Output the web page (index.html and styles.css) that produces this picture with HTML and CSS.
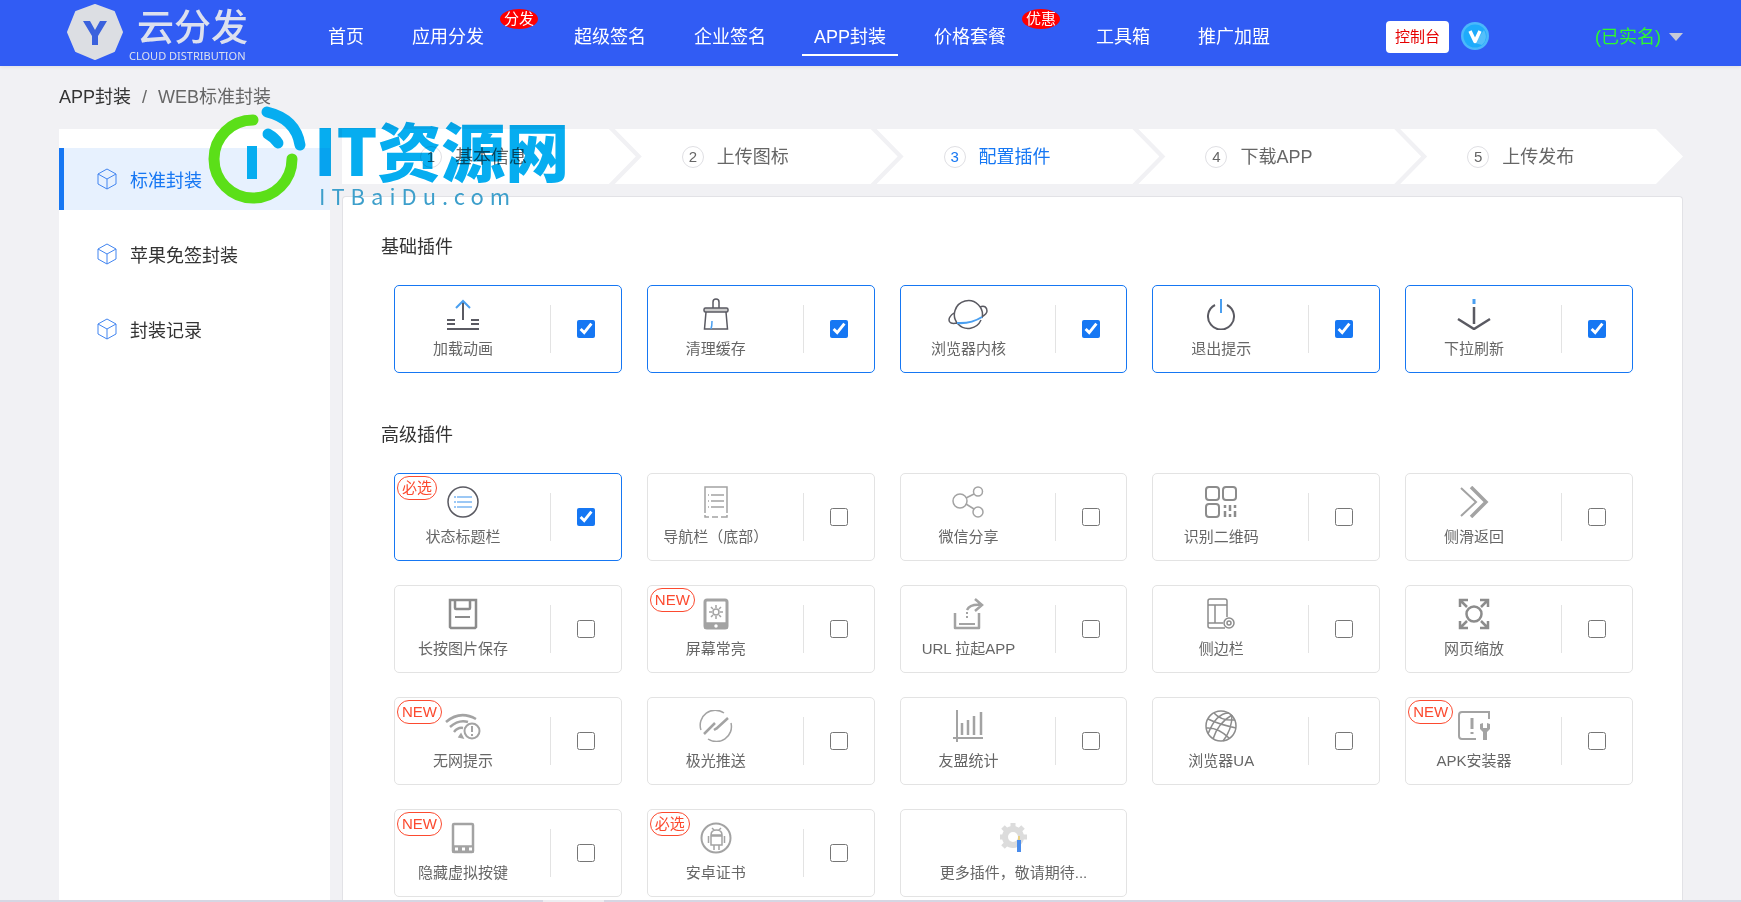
FILE: index.html
```html
<!DOCTYPE html>
<html lang="zh-CN">
<head>
<meta charset="utf-8">
<title>WEB标准封装</title>
<link rel="stylesheet" href="styles.css">
</head>
<body>
<header class="header">
  <a class="logo" href="#">
    <svg class="logo-mark" viewBox="0 0 56 56" width="56" height="56"><path d="M28 1 47 8 55 28 47 47 28 55 9 47 1 28 9 8Z" fill="#dcdee3" stroke="#dcdee3" stroke-width="2" stroke-linejoin="round"/><path d="M16 17h7l5 9 5-9h7l-9 15v9h-6v-9z" fill="#3a61dd"/></svg>
    <span class="logo-text"><span class="logo-name">云分发</span><span class="logo-sub">CLOUD DISTRIBUTION</span></span>
  </a>
  <nav class="nav">
    <a href="#">首页</a>
    <span class="nav-group"><a href="#">应用分发</a><span class="nav-badge">分发</span></span>
    <a href="#">超级签名</a>
    <a href="#">企业签名</a>
    <a class="current" href="#">APP封装</a>
    <span class="nav-group"><a href="#">价格套餐</a><span class="nav-badge">优惠</span></span>
    <a href="#">工具箱</a>
    <a href="#">推广加盟</a>
  </nav>
  <a class="console" href="#">控制台</a>
  <svg class="vip" viewBox="0 0 28 28" width="28" height="28"><circle cx="14" cy="14" r="14" fill="#4bb8fb"/><circle cx="14" cy="14" r="11.500" fill="#1eabfb"/><path d="M14 21 23 8a11.500 11.500 0 0 1-2 15z" fill="#55bffa"/><path d="M9 9 14 19.500 19 9" fill="none" stroke="#fff" stroke-width="3.500" stroke-linejoin="round"/></svg>
  <button class="user" type="button">(已实名)<span class="caret"></span></button>
</header>

<div class="page">
  <nav class="crumbs"><a href="#">APP封装</a><span class="slash">/</span><span>WEB标准封装</span></nav>
  <div class="layout">
    <aside class="side">
      <a class="side-item active" href="#"><svg class="cube" viewBox="0 0 20 22"><path d="M10 1 19 6V16L10 21 1 16V6ZM1 6 10 11 19 6M10 11V21"/></svg>标准封装</a>
      <a class="side-item" href="#"><svg class="cube" viewBox="0 0 20 22"><path d="M10 1 19 6V16L10 21 1 16V6ZM1 6 10 11 19 6M10 11V21"/></svg>苹果免签封装</a>
      <a class="side-item" href="#"><svg class="cube" viewBox="0 0 20 22"><path d="M10 1 19 6V16L10 21 1 16V6ZM1 6 10 11 19 6M10 11V21"/></svg>封装记录</a>
    </aside>
    <main class="main">
      <ol class="steps">
        <li class="step"><span class="num">1</span>基本信息</li>
        <li class="step"><span class="num">2</span>上传图标</li>
        <li class="step on"><span class="num">3</span>配置插件</li>
        <li class="step"><span class="num">4</span>下载APP</li>
        <li class="step"><span class="num">5</span>上传发布</li>
      </ol>
      <div class="panel">
        <section>
          <h2>基础插件</h2>
          <div class="cards">
            <label class="card picked"><span class="info"><svg class="icon dark" viewBox="0 0 40 32"><path d="M20 3V22" stroke-width="2"/><path class="blue" d="M13 10 20 3 27 10" stroke-width="2"/><path d="M4 22h8M4 26h8M28 22h8M28 26h8M4 31h32" stroke-width="2"/></svg>加载动画</span><span class="pick"><input type="checkbox" checked></span></label>
            <label class="card picked"><span class="info"><svg class="icon dark" viewBox="0 0 40 32"><path d="M17 10V4a3 3 0 0 1 6 0v6"/><rect x="8" y="10" width="24" height="4" rx="1.500" fill="#ccc"/><path d="M10 14 8.500 31h23L30 14"/><path class="blue" d="M15 31q1-3 1-8"/></svg>清理缓存</span><span class="pick"><input type="checkbox" checked></span></label>
            <label class="card picked"><span class="info"><svg class="icon dark" viewBox="0 0 40 32"><path d="M10 26A14 14 0 1 1 34 20M33 22A14 14 0 0 1 10 26M32 9c4-2 7 0 7 4 0 2-2 4-5 6M6 15c-3 2-5 4-5 7 0 3 3 4 8 3"/><path class="blue" d="M9 25q14 1 25-6" stroke-width="2"/></svg>浏览器内核</span><span class="pick"><input type="checkbox" checked></span></label>
            <label class="card picked"><span class="info"><svg class="icon dark" viewBox="0 0 40 32"><path d="M14 7A13 13 0 1 0 26 7" stroke-width="2"/><path class="blue" d="M20 1v14" stroke-width="2"/></svg>退出提示</span><span class="pick"><input type="checkbox" checked></span></label>
            <label class="card picked"><span class="info"><svg class="icon dark" viewBox="0 0 40 32"><path d="M20 9v17M4 21 20 31 36 21" stroke-width="2.500"/><path class="blue" d="M20 1v5" stroke-width="3"/></svg>下拉刷新</span><span class="pick"><input type="checkbox" checked></span></label>
          </div>
        </section>
        <section>
          <h2>高级插件</h2>
          <div class="cards">
            <label class="card picked"><span class="tag">必选</span><span class="info"><svg class="icon dark" viewBox="0 0 40 32"><circle cx="20" cy="16" r="15"/><path class="blue pale" d="M14 11h15M14 16h15M14 21h15M11 11h2M11 16h2M11 21h2" stroke-width="2"/></svg>状态标题栏</span><span class="pick"><input type="checkbox" checked></span></label>
            <label class="card"><span class="info"><svg class="icon" viewBox="0 0 40 32"><path d="M9 27V1h22v26M9 29v2h4M16 31h6M25 31h6v-2M15 9h13M15 15h13M15 21h13M12 9h1M12 15h1M12 21h1"/></svg>导航栏（底部）</span><span class="pick"><input type="checkbox"></span></label>
            <label class="card"><span class="info"><svg class="icon" viewBox="0 0 40 32"><circle cx="12" cy="15" r="7"/><circle cx="30" cy="5.500" r="4.500"/><circle cx="30" cy="26" r="5"/><path d="M18 12 26 8M18 18 26 23"/></svg>微信分享</span><span class="pick"><input type="checkbox"></span></label>
            <label class="card"><span class="info"><svg class="icon mid" viewBox="0 0 40 32"><g stroke-width="2"><rect x="5" y="1" width="13" height="13" rx="3"/><rect x="22" y="1" width="13" height="13" rx="3"/><rect x="5" y="18" width="13" height="13" rx="3"/></g><path d="M24 19v3M24 25v6M29 19v6M29 28v3M34 19v3M34 25v6" stroke-width="2.500"/></svg>识别二维码</span><span class="pick"><input type="checkbox"></span></label>
            <label class="card"><span class="info"><svg class="icon" viewBox="0 0 40 32"><path d="M7 2 22 16 7 30" stroke-width="2"/><path d="M17 1 32 16 17 31" stroke-width="3.500"/></svg>侧滑返回</span><span class="pick"><input type="checkbox"></span></label>

            <label class="card"><span class="info"><svg class="icon mid" viewBox="0 0 40 32"><path d="M7 2h26v27l-1 1H8l-1-1zM12 2v8q0 1 1 1h13q1 0 1-1V2" stroke-width="2.500"/><path d="M12 19h15" stroke-width="2"/></svg>长按图片保存</span><span class="pick"><input type="checkbox"></span></label>
            <label class="card"><span class="tag">NEW</span><span class="info"><svg class="icon" viewBox="0 0 40 32"><rect x="9" y="2" width="22" height="28" rx="2" stroke-width="3"/><path d="M9 25h22v5H9z" fill="#a3a3a3"/><circle cx="20" cy="28" r="1" fill="#fff" stroke="#fff"/><circle cx="20" cy="14" r="3"/><path d="M20 7v3M20 18v3M13 14h3M24 14h3M15 9l2 2M23 17l2 2M25 9l-2 2M17 17l-2 2"/></svg>屏幕常亮</span><span class="pick"><input type="checkbox"></span></label>
            <label class="card"><span class="info"><svg class="icon" viewBox="0 0 40 32"><path d="M7 15v15h24V15" stroke-width="2.500" stroke-linejoin="round"/><path d="M11 26h16" stroke-width="2"/><path d="M19 12q3-6 14-5M27 1l7 6-7 6" stroke-width="2.500"/><path d="M19 14v2M19 18v2" stroke-width="2"/></svg>URL 拉起APP</span><span class="pick"><input type="checkbox"></span></label>
            <label class="card"><span class="info"><svg class="icon mid" viewBox="0 0 40 32"><path d="M24 30H9q-2 0-2-2V3q0-2 2-2h15q2 0 2 2v16M7 7h19M7 25h15M14 7v18"/><circle cx="28" cy="25" r="5"/><circle cx="28" cy="25" r="2"/></svg>侧边栏</span><span class="pick"><input type="checkbox"></span></label>
            <label class="card"><span class="info"><svg class="icon mid" viewBox="0 0 40 32"><circle cx="20" cy="16" r="7.500" stroke-width="2.500"/><path d="M6 9V2h8M6 2l7 7M26 2h8v7M34 2l-7 7M6 23v7h8M6 30l7-7M34 23v7h-8M34 30l-7-7" stroke-width="2.500"/></svg>网页缩放</span><span class="pick"><input type="checkbox"></span></label>

            <label class="card"><span class="tag">NEW</span><span class="info"><svg class="icon" viewBox="0 0 40 32"><path d="M3 12Q17 0 33 9M7 17q9-8 18-5M11 22q4-5 9-4" stroke-width="2.500"/><path d="M16 27l2-3 2 4z" fill="#a3a3a3"/><circle cx="29" cy="21" r="7.500" stroke-width="2"/><path d="M29 16v6M29 24v2" stroke-width="2"/></svg>无网提示</span><span class="pick"><input type="checkbox"></span></label>
            <label class="card"><span class="info"><svg class="icon" viewBox="0 0 40 32"><path d="M5 20A15 15 0 0 1 28 3M35 13A15 15 0 0 1 12 29"/><path d="M8 24 19 13M18 20l3-2M20 19 32 8" stroke-width="2.500"/></svg>极光推送</span><span class="pick"><input type="checkbox"></span></label>
            <label class="card"><span class="info"><svg class="icon" viewBox="0 0 40 32"><path d="M9 0v32M5 28h30" stroke-width="2"/><path d="M14 13v12M20 10v15M26 6v19M33 2v23" stroke-width="2.500"/></svg>友盟统计</span><span class="pick"><input type="checkbox"></span></label>
            <label class="card"><span class="info"><svg class="icon mid" viewBox="0 0 40 32"><circle cx="20" cy="16" r="15"/><path d="M13 3q7 8 21 7M7 9q10 5 28 9M5 18q12-1 23 10M7 24Q15 3 28 3M12 29Q17 13 31 5M22 31Q31 20 31 5"/></svg>浏览器UA</span><span class="pick"><input type="checkbox"></span></label>
            <label class="card"><span class="tag">NEW</span><span class="info"><svg class="icon" viewBox="0 0 40 32"><path d="M22 29H8q-3 0-3-3V5q0-3 3-3h27v7" stroke-width="2"/><path d="M18 8v11M18 22v2" stroke-width="3"/><path d="M26 14v5l3 3v8h4v-8l3-3v-5l-3-1v5h-4v-5z" fill="#a3a3a3" stroke="none"/></svg>APK安装器</span><span class="pick"><input type="checkbox"></span></label>

            <label class="card"><span class="tag">NEW</span><span class="info"><svg class="icon" viewBox="0 0 40 32"><rect x="10" y="2" width="20" height="28" rx="1" stroke-width="2.500"/><path d="M10 24h20v6H10z" fill="#a3a3a3"/><path d="M12 27h3M19 27h3M26 27h3" stroke="#fff" stroke-width="3"/></svg>隐藏虚拟按键</span><span class="pick"><input type="checkbox"></span></label>
            <label class="card"><span class="tag">必选</span><span class="info"><svg class="icon" viewBox="0 0 40 32"><circle cx="20" cy="16" r="14.500" stroke-width="2"/><path d="M15 13q0-5 5.500-5t5.500 5zM15 14h11v9H15zM18 23v5M23 23v5M12.500 14v7M28.500 14v7M16 6l2 2M25 6l-2 2"/></svg>安卓证书</span><span class="pick"><input type="checkbox"></span></label>
            <div class="card more"><svg class="icon" viewBox="0 0 40 32"><g stroke="#dcdcdc"><circle cx="20" cy="15" r="8" stroke-width="6"/><path d="M20 1v4M7 15h3M30 15h4M10 5l4 4M30 5l-4 4M10 25l4-4" stroke-width="5"/></g><path d="M26 18v12" stroke="#4a8ceb" stroke-width="4"/><path d="M26 14v4" stroke="#e8cf83" stroke-width="2"/></svg>更多插件，敬请期待...</div>
          </div>
        </section>
      </div>
    </main>
  </div>
</div>

<div class="watermark">
  <svg class="wm-ring" viewBox="0 0 90 100" width="90" height="100" fill="none" stroke-linecap="round" stroke-width="11"><path d="M44 15A39 39 0 1 0 83 54" stroke="#5bdf18"/><path d="M58 7Q87 14 91 40" stroke="#06adf0"/><path d="M59 29Q66 33 69 38" stroke="#06adf0"/><path d="M38 41h10v33H38z" fill="#06adf0" stroke="none"/></svg>
  <div class="wm-text"><span class="wm-name">IT资源网</span><span class="wm-url">ITBaiDu.com</span></div>
</div>
<div class="edge"></div>
</body>
</html>
```
FILE: styles.css
```css
* { box-sizing: border-box; }

body {
  margin: 0;
  min-height: 100vh;
  display: flex;
  flex-direction: column;
  background: #f1f1f4;
  color: #333;
  font: 18px/26px "Liberation Sans", "Noto Sans CJK SC", sans-serif;
}

a { color: inherit; text-decoration: none; }

.header {
  display: flex;
  align-items: center;
  height: 66px;
  padding: 0 58px 0 67px;
  background: #315cf4;
  color: #fff;
  box-shadow: 0 1px 4px rgba(0, 0, 0, .08);
}

.logo { display: flex; gap: 6px; width: 249px; color: #dce0ee; }
.logo-mark { flex: none; }
.logo-text { display: flex; flex-direction: column; }
.logo-name { padding: 4px 0 0 8px; font-size: 37px; line-height: 42px; font-weight: 500; }
.logo-sub { font: 11px/12px "Noto Sans", sans-serif; white-space: nowrap; }

.nav { display: flex; gap: 24px; align-self: stretch; padding-top: 18px; }
.nav a { height: 38px; padding: 6px 12px; white-space: nowrap; }
.nav .current { border-bottom: 2px solid #fff; }
.nav-group { display: flex; gap: 4px; }
.nav-badge {
  height: 20px;
  margin-top: -9px;
  padding: 0 4px;
  border-radius: 50%;
  background: #f00;
  font-size: 15px;
  line-height: 19px;
}

.console {
  margin: 8px 0 0 104px;
  padding: 3px 9px;
  border-radius: 4px;
  background: #fff;
  color: #e60000;
  font-size: 15px;
  white-space: nowrap;
}
.vip { flex: none; margin: 6px 0 0 12px; }
.user {
  display: flex;
  align-items: center;
  gap: 8px;
  margin-left: auto;
  padding: 8px 0 0;
  border: 0;
  background: none;
  color: #2dfa2d;
  font: inherit;
}
.caret { border: 7px solid transparent; border-top: 8px solid #c6cad6; border-bottom: 0; }

.page { flex: 1; display: flex; flex-direction: column; padding: 18px 58px 0 59px; }
.crumbs { display: flex; gap: 11px; margin-bottom: 19px; color: #666; }
.crumbs a { color: #333; }

.layout { flex: 1; display: flex; gap: 12px; }
.side {
  flex: none;
  display: flex;
  flex-direction: column;
  gap: 13px;
  width: 271px;
  padding-top: 19px;
  background: #fff;
}
.side-item {
  display: flex;
  align-items: center;
  gap: 13px;
  height: 62px;
  padding: 4px 0 0 33px;
  border-left: 5px solid transparent;
}
.side-item.active { border-color: #1677f3; background: #e7f1fe; color: #1677f3; }
.cube { width: 20px; height: 22px; margin-bottom: 5px; fill: none; stroke: #4285f0; stroke-width: 1; }

.main { flex: 1; display: flex; flex-direction: column; gap: 12px; min-width: 0; }
.steps { display: flex; margin: 0; padding: 0; list-style: none; color: #666; }
.step {
  flex: 1 1 282px;
  display: flex;
  align-items: center;
  gap: 13px;
  height: 55px;
  margin-left: -21px;
  padding-left: 67px;
  background: #fff;
  clip-path: polygon(0 0, calc(100% - 27px) 0, 100% 50%, calc(100% - 27px) 100%, 0 100%, 27px 50%);
}
.step:first-child {
  flex-basis: 293px;
  margin-left: 0;
  padding-left: 78px;
  clip-path: polygon(0 0, calc(100% - 27px) 0, 100% 50%, calc(100% - 27px) 100%, 0 100%);
}
.step.on { color: #1677f3; }
.num {
  width: 22px;
  height: 22px;
  border: 1px solid #dfdfe3;
  border-radius: 50%;
  font-size: 15px;
  line-height: 20px;
  text-align: center;
}

.panel {
  flex: 1;
  display: flex;
  flex-direction: column;
  gap: 49px;
  padding: 37px 49px 0 38px;
  border: 1px solid #e2e2e6;
  border-bottom: 0;
  border-radius: 4px 4px 0 0;
  background: #fff;
}
h2 { margin: 0 0 25px; font-size: 18px; line-height: 26px; font-weight: 400; }
.cards { display: grid; grid-template-columns: repeat(5, 1fr); gap: 25px; padding-left: 13px; }
.card {
  position: relative;
  display: flex;
  height: 88px;
  border: 1px solid #e3e3e3;
  border-radius: 5px;
  color: #666;
  font-size: 15px;
  line-height: 20px;
}
.cards { row-gap: 24px; }
.card.picked { border-color: #1677f3; }
.info {
  flex: 1;
  display: flex;
  flex-direction: column;
  align-items: center;
  gap: 9px;
  padding: 12px 19px 0 0;
  white-space: nowrap;
}
.pick {
  display: flex;
  align-items: center;
  justify-content: center;
  width: 71px;
  height: 48px;
  margin-top: 19px;
  border-left: 1px solid #e3e3e3;
}
.pick input { width: 18px; height: 18px; margin: 0; accent-color: #1677f3; }
.tag {
  position: absolute;
  top: 2px;
  left: 2px;
  padding: 0 4px;
  border: 1px solid #fc4a2f;
  border-radius: 12px;
  color: #fc4a2f;
  line-height: 22px;
}
.more { flex-direction: column; align-items: center; gap: 9px; padding-top: 12px; }

.icon { flex: none; width: 40px; height: 32px; fill: none; stroke: #a3a3a3; stroke-width: 1.5; }
.icon.mid { stroke: #8c8c8c; }
.icon.dark { stroke: #5a5a62; }
.icon .blue { stroke: #4a9ff0; }
.icon .pale { stroke: #9cc8f5; }

.watermark {
  position: absolute;
  top: 105px;
  left: 209px;
  display: flex;
  gap: 15px;
  pointer-events: none;
}
.wm-ring { overflow: visible; }
.wm-text { display: flex; flex-direction: column; padding-top: 8px; font-family: "Noto Sans CJK SC", sans-serif; }
.wm-name { color: #06adf0; font-size: 64px; line-height: 70px; font-weight: 900; white-space: nowrap; mix-blend-mode: multiply; }
.wm-url { padding-left: 5px; color: #3d9fcb; font-size: 22px; line-height: 24px; letter-spacing: 6px; }

.edge {
  position: fixed;
  right: 0;
  bottom: 0;
  left: 0;
  height: 2px;
  background: linear-gradient(#ededf1, #ededf1) 543px 0 / 61px 2px no-repeat #d6d6e3;
}
```
